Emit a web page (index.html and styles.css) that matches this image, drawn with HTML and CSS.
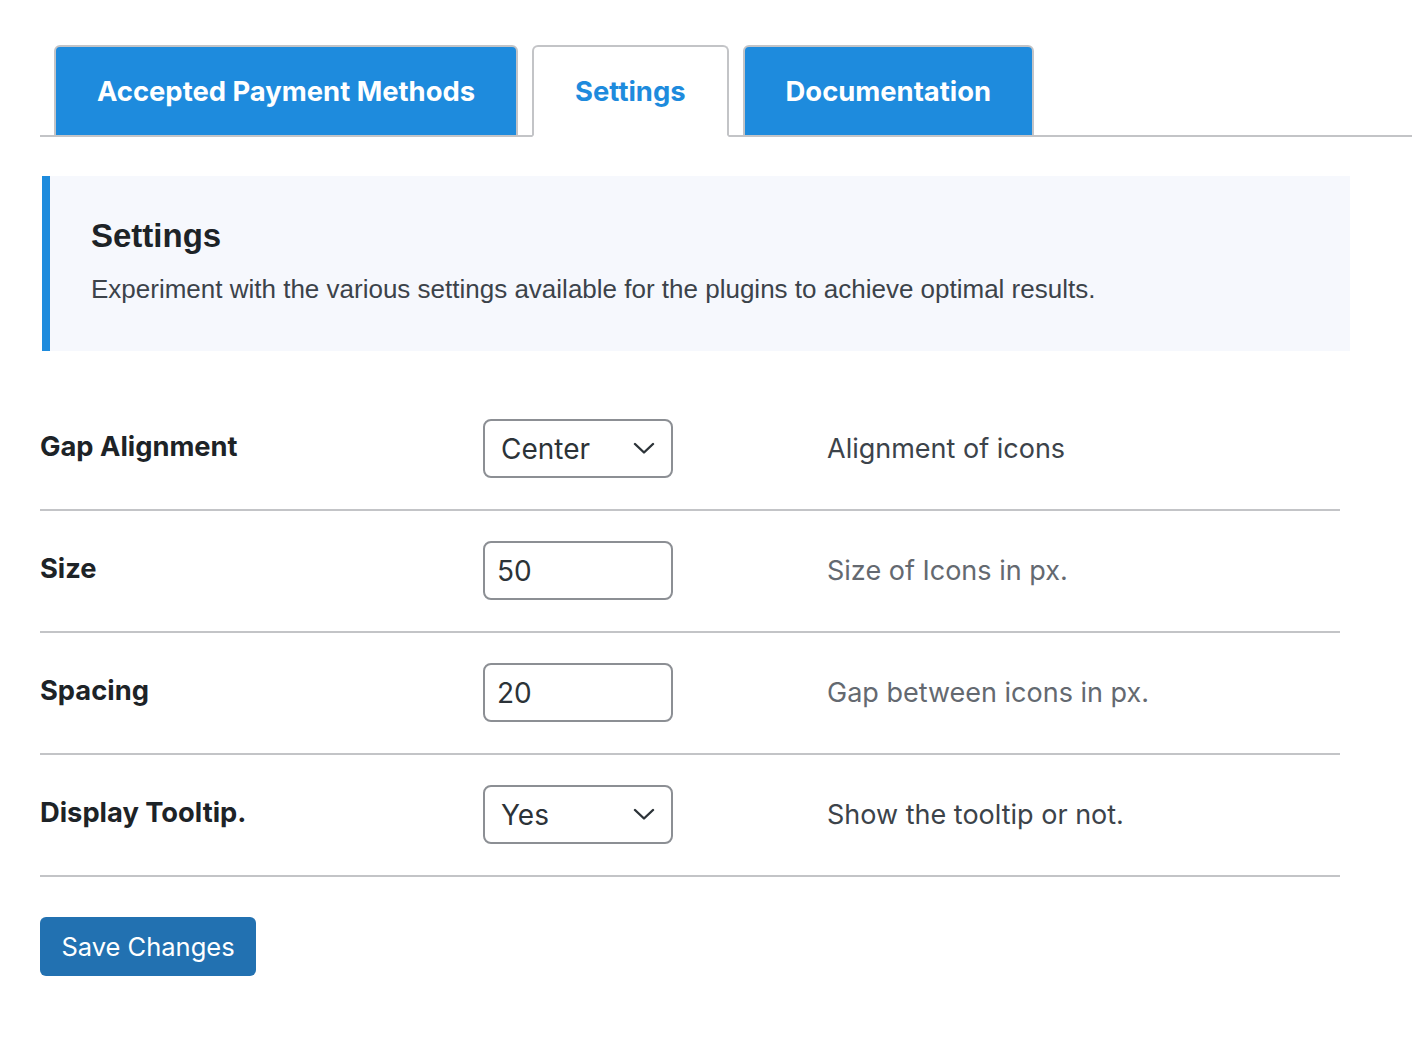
FILE: index.html
```html
<!DOCTYPE html>
<html lang="en">
<head>
  <meta charset="UTF-8">
  <title>Payment Icons – Settings</title>
  <link rel="stylesheet" href="styles.css">
</head>
<body>
  <div class="wrap">

    <!-- Abas do plugin -->
    <nav class="nav-tabs">
      <a href="#metodos" class="nav-tab">Accepted Payment Methods</a>
      <a href="#settings" class="nav-tab active">Settings</a>
      <a href="#docs" class="nav-tab">Documentation</a>
    </nav>

    <div class="notice">
      <h2>Settings</h2>
      <p>Experiment with the various settings available for the plugins to achieve optimal results.</p>
    </div>

    <form id="formSettings">
      <div class="form-row">
        <label for="alinhamento">Gap Alignment</label>
        <div class="select-box">
          <select id="alinhamento">
            <option>Center</option>
            <option>Left</option>
            <option>Right</option>
          </select>
          <svg class="chevron" viewBox="0 0 22 12" aria-hidden="true">
            <path d="M2 2l9 8.5 9-8.5" />
          </svg>
        </div>
        <span class="desc dark">Alignment of icons</span>
      </div>

      <div class="form-row">
        <label for="tamanho">Size</label>
        <input type="text" id="tamanho" value="50">
        <span class="desc">Size of Icons in px.</span>
      </div>

      <div class="form-row">
        <label for="espaco">Spacing</label>
        <input type="text" id="espaco" value="20">
        <span class="desc">Gap between icons in px.</span>
      </div>

      <div class="form-row">
        <label for="tooltip">Display Tooltip.</label>
        <div class="select-box">
          <select id="tooltip">
            <option>Yes</option>
            <option>No</option>
          </select>
          <svg class="chevron" viewBox="0 0 22 12" aria-hidden="true">
            <path d="M2 2l9 8.5 9-8.5" />
          </svg>
        </div>
        <span class="desc dark">Show the tooltip or not.</span>
      </div>

      <button type="submit" class="save-button">Save Changes</button>
    </form>

  </div>
</body>
</html>
```

FILE: styles.css
```css
* {
  margin: 0;
  padding: 0;
  box-sizing: border-box;
}

body {
  font-family: Inter, 'Noto Sans', sans-serif;
  background-color: white;
  color: #1d2327;
}

.wrap {
  padding-left: 40px;
}

/* Abas */
.nav-tabs {
  display: flex;
  gap: 14px;
  padding-top: 45px;
  padding-left: 14px;
  border-bottom: 2px solid #c3c4c7;
}

.nav-tab {
  display: block;
  background-color: #1e8bdd;
  color: white;
  text-decoration: none;
  font-size: 27.4px;
  font-weight: 700;
  line-height: 88px;
  padding: 0 41px;
  border: 2px solid #c3c4c7;
  border-radius: 6px 6px 0 0;
  margin-bottom: -2px;
}

.nav-tab.active {
  background-color: white;
  color: #1e8bdd;
  border-bottom-color: white;
}

/* Caixa de aviso */
.notice {
  margin: 39px 0 0 2px;
  width: 1308px;
  background-color: #f6f8fd;
  border-left: 8px solid #1e8bdd;
  padding: 40px 41px 45px;
  font-family: 'Liberation Sans', Arial, sans-serif;
}

.notice h2 {
  font-size: 33px;
  font-weight: 700;
  line-height: 40px;
  color: #1d2327;
}

.notice p {
  font-size: 26px;
  line-height: 34px;
  margin-top: 16px;
  color: #3c434a;
}

/* Linhas do formulário */
#formSettings {
  width: 1300px;
  padding-top: 38px;
}

.form-row {
  display: grid;
  grid-template-columns: 443px 344px 1fr;
  align-items: center;
  padding: 30px 0 31px;
  border-bottom: 2px solid #c3c4c7;
}

.form-row label {
  font-size: 27.3px;
  font-weight: 700;
  margin-top: -4px;
}

.form-row input,
.form-row select {
  display: block;
  width: 190px;
  height: 59px;
  border: 2px solid #8c8f94;
  border-radius: 8px;
  background-color: white;
  font-family: Inter, sans-serif;
  font-size: 28px;
  color: #2c3338;
}

.form-row input {
  padding: 0 12px;
}

.form-row select {
  appearance: none;
  -webkit-appearance: none;
  padding: 0 16px;
}

.select-box {
  position: relative;
  width: 190px;
}

.chevron {
  position: absolute;
  right: 18px;
  top: 23px;
  width: 22px;
  height: 12px;
  fill: none;
  stroke: #2c3338;
  stroke-width: 2.4;
  stroke-linecap: round;
  stroke-linejoin: round;
  pointer-events: none;
}

.desc {
  font-size: 27px;
  color: #646970;
}

.desc.dark {
  color: #3c434a;
}

.save-button {
  display: block;
  margin-top: 40px;
  width: 216px;
  height: 59px;
  background-color: #2271b1;
  color: white;
  border: none;
  border-radius: 6px;
  font-family: Inter, sans-serif;
  font-size: 25.5px;
  cursor: pointer;
}
```
